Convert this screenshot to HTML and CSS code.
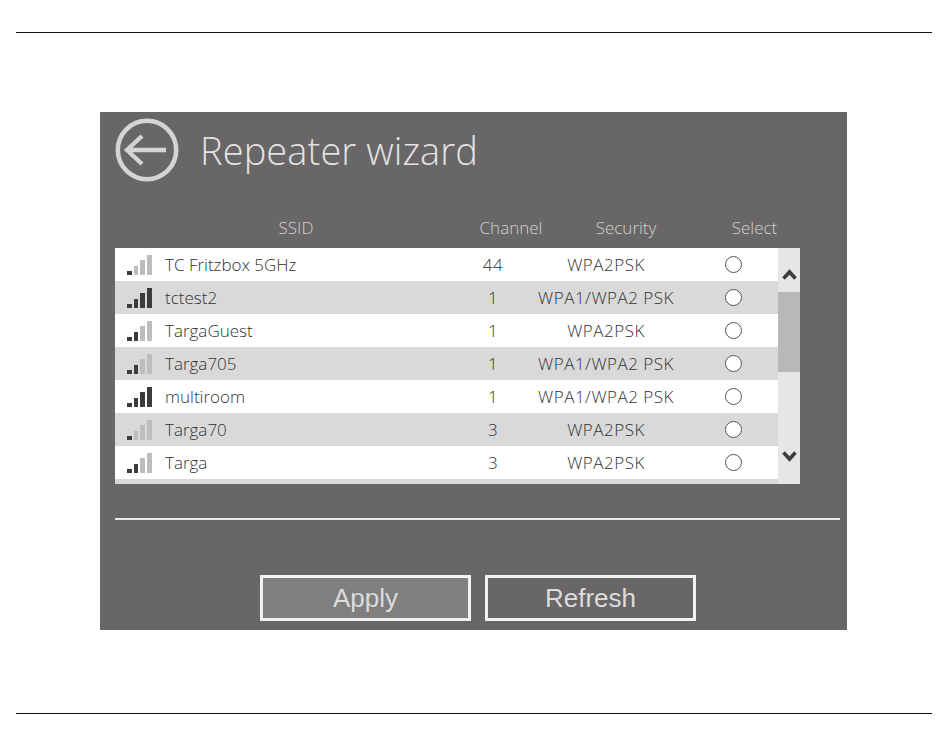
FILE: index.html
```html
<!DOCTYPE html>
<html lang="en">
<head>
    <meta charset="UTF-8">
    <meta name="viewport" content="width=device-width, initial-scale=1.0">
    <title>Repeater wizard</title>
    <link rel="stylesheet" href="styles.css">
</head>
<body>
    <hr class="page-rule page-rule-top">
    <div class="panel">
        <div class="panel-head">
            <svg class="back-icon" width="64" height="64" viewBox="0 0 64 64">
                <circle cx="32" cy="32" r="29.2" fill="none" stroke="#d4d4d4" stroke-width="4.6"/>
                <path d="M51 32H13M27 18L12 32L27 46" fill="none" stroke="#d4d4d4" stroke-width="4.4"/>
            </svg>
            <h1>Repeater wizard</h1>
        </div>

        <div class="col-head">
            <div>SSID</div>
            <div>Channel</div>
            <div>Security</div>
            <div>Select</div>
        </div>

        <div class="list-wrap">
            <div class="list">
                <div class="row">
                    <div class="signal"><i class="on"></i><i class="off"></i><i class="off"></i><i class="off"></i></div>
                    <div class="ssid">TC Fritzbox 5GHz</div>
                    <div class="cell">44</div>
                    <div class="cell">WPA2PSK</div>
                    <div class="radio"></div>
                </div>
                <div class="row alt">
                    <div class="signal"><i class="on"></i><i class="on"></i><i class="on"></i><i class="on"></i></div>
                    <div class="ssid">tctest2</div>
                    <div class="cell">1</div>
                    <div class="cell">WPA1/WPA2 PSK</div>
                    <div class="radio"></div>
                </div>
                <div class="row">
                    <div class="signal"><i class="on"></i><i class="on"></i><i class="off"></i><i class="off"></i></div>
                    <div class="ssid">TargaGuest</div>
                    <div class="cell">1</div>
                    <div class="cell">WPA2PSK</div>
                    <div class="radio"></div>
                </div>
                <div class="row alt">
                    <div class="signal"><i class="on"></i><i class="on"></i><i class="off"></i><i class="off"></i></div>
                    <div class="ssid">Targa705</div>
                    <div class="cell">1</div>
                    <div class="cell">WPA1/WPA2 PSK</div>
                    <div class="radio"></div>
                </div>
                <div class="row">
                    <div class="signal"><i class="on"></i><i class="on"></i><i class="on"></i><i class="on"></i></div>
                    <div class="ssid">multiroom</div>
                    <div class="cell">1</div>
                    <div class="cell">WPA1/WPA2 PSK</div>
                    <div class="radio"></div>
                </div>
                <div class="row alt">
                    <div class="signal"><i class="on"></i><i class="off"></i><i class="off"></i><i class="off"></i></div>
                    <div class="ssid">Targa70</div>
                    <div class="cell">3</div>
                    <div class="cell">WPA2PSK</div>
                    <div class="radio"></div>
                </div>
                <div class="row">
                    <div class="signal"><i class="on"></i><i class="on"></i><i class="off"></i><i class="off"></i></div>
                    <div class="ssid">Targa</div>
                    <div class="cell">3</div>
                    <div class="cell">WPA2PSK</div>
                    <div class="radio"></div>
                </div>
                <div class="row-peek"></div>
            </div>
            <div class="scrollbar">
                <svg class="scroll-arrow" width="15" height="11" viewBox="0 0 15 11">
                    <path d="M1.5 9.5L7.5 3L13.5 9.5" fill="none" stroke="#3c3c3c" stroke-width="3.6"/>
                </svg>
                <div class="scroll-thumb"></div>
                <svg class="scroll-arrow scroll-arrow-down" width="15" height="11" viewBox="0 0 15 11">
                    <path d="M1.5 1.5L7.5 8L13.5 1.5" fill="none" stroke="#3c3c3c" stroke-width="3.6"/>
                </svg>
            </div>
        </div>

        <div class="divider"></div>

        <div class="buttons">
            <button class="btn btn-active">Apply</button>
            <button class="btn">Refresh</button>
        </div>
    </div>
    <hr class="page-rule page-rule-bottom">
</body>
</html>
```

FILE: styles.css
```css
body {
    margin: 0;
    background-color: white;
    font-family: "Open Sans", sans-serif;
}
.page-rule {
    height: 1px;
    margin: 0 18px 0 16px;
    border: none;
    background-color: #111;
}
.page-rule-top {
    margin-top: 32px;
}
.page-rule-bottom {
    margin-top: 83px;
}
.panel {
    box-sizing: border-box;
    width: 747px;
    height: 518px;
    margin: 79px 0 0 100px;
    padding: 6px 0 0 15px;
    background-color: #686667;
}
.panel-head {
    display: flex;
    align-items: center;
    gap: 21px;
    height: 64px;
}
.back-icon {
    flex: none;
}
h1 {
    margin: 0;
    color: #e2e2e2;
    font-size: 38px;
    font-weight: 300;
    letter-spacing: 0.1px;
}
.col-head {
    display: grid;
    grid-template-columns: 362px 68px 162px 95px;
    height: 34px;
    margin: 28px 0 4px;
    align-items: center;
    color: #d2d2d2;
    font-size: 17px;
    font-weight: 300;
    text-align: center;
}
.list-wrap {
    display: flex;
    width: 685px;
    height: 236px;
}
.list {
    width: 663px;
    background-color: white;
}
.row {
    display: grid;
    grid-template-columns: 50px 288px 80px 146px 99px;
    align-items: center;
    height: 33px;
    color: #333;
    font-size: 17px;
    font-weight: 300;
}
.alt {
    background-color: #d9d9d9;
}
.row-peek {
    height: 5px;
    background-color: #d9d9d9;
}
.signal {
    display: flex;
    align-items: flex-end;
    gap: 2.2px;
    height: 20px;
    padding-left: 12px;
}
.signal i {
    width: 4.5px;
}
.signal i:nth-child(1) { height: 4px; }
.signal i:nth-child(2) { height: 9px; }
.signal i:nth-child(3) { height: 15px; }
.signal i:nth-child(4) { height: 20px; }
.signal .on {
    background-color: #3c3c3c;
}
.signal .off {
    background-color: #bdbdbd;
}
.cell {
    text-align: center;
    white-space: nowrap;
    letter-spacing: 0.5px;
}
.radio {
    box-sizing: border-box;
    width: 17px;
    height: 17px;
    margin-left: 46px;
    border: 1px solid #555;
    border-radius: 50%;
    background-color: white;
}
.scrollbar {
    display: flex;
    flex-direction: column;
    align-items: center;
    width: 22px;
    background-color: #e6e6e6;
}
.scroll-arrow {
    flex: none;
    margin-top: 21px;
    margin-bottom: 12px;
}
.scroll-thumb {
    flex: none;
    width: 100%;
    height: 80px;
    background-color: #b8b8b8;
}
.scroll-arrow-down {
    margin-top: 79px;
    margin-bottom: 0;
}
.divider {
    width: 725px;
    height: 2px;
    margin-top: 34px;
    background-color: #e8e8e8;
}
.buttons {
    display: flex;
    gap: 14px;
    margin: 55px 0 0 145px;
}
.btn {
    box-sizing: border-box;
    width: 211px;
    height: 46px;
    padding: 0;
    border: 3px solid #f2f2f2;
    background-color: #686667;
    color: #dcdcdc;
    font-family: "Liberation Sans", Arial, sans-serif;
    font-size: 26px;
    cursor: pointer;
}
.btn-active {
    background-color: #807f7f;
}
```
